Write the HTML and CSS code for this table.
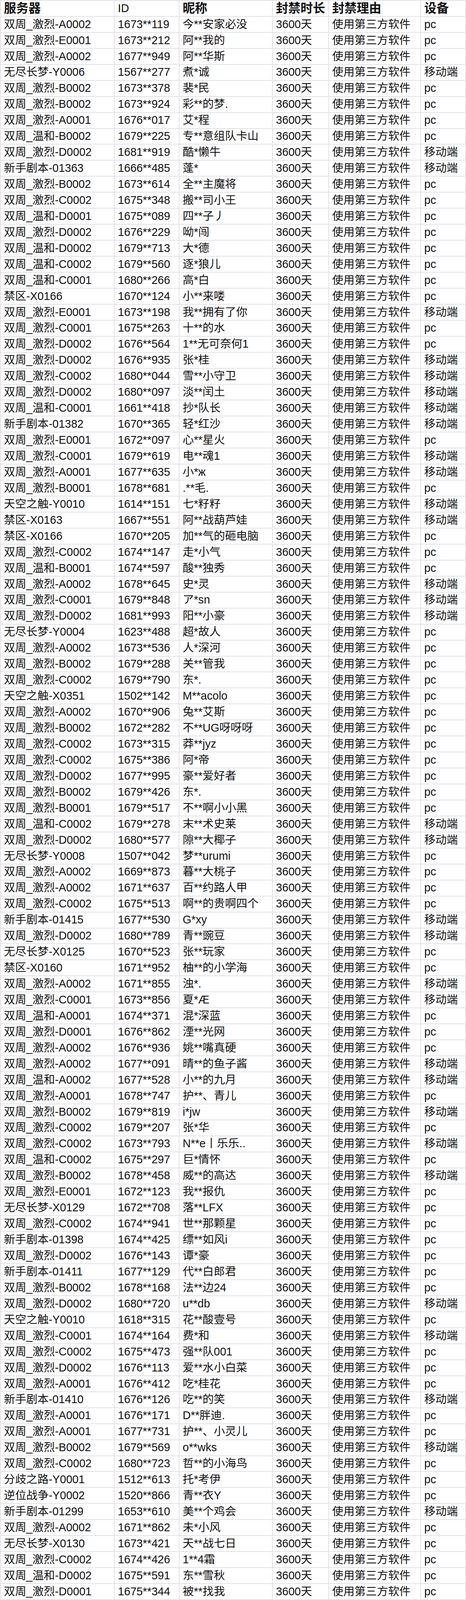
FILE: index.html
```html
<!DOCTYPE html>
<html lang="zh-CN">
<head>
<meta charset="utf-8">
<title>封禁名单</title>
<link rel="stylesheet" href="styles.css">
</head>
<body>
<div class="sheet">
<div class="row head"><div class="c">服务器</div><div class="c id">ID</div><div class="c">昵称</div><div class="c">封禁时长</div><div class="c">封禁理由</div><div class="c">设备</div></div>
<div class="row"><div class="c">双周_激烈-A0002</div><div class="c">1673**119</div><div class="c">今**安家必没</div><div class="c">3600天</div><div class="c">使用第三方软件</div><div class="c">pc</div></div>
<div class="row"><div class="c">双周_激烈-E0001</div><div class="c">1673**212</div><div class="c">阿**我的</div><div class="c">3600天</div><div class="c">使用第三方软件</div><div class="c">pc</div></div>
<div class="row"><div class="c">双周_激烈-A0002</div><div class="c">1677**949</div><div class="c">阿**华斯</div><div class="c">3600天</div><div class="c">使用第三方软件</div><div class="c">pc</div></div>
<div class="row"><div class="c">无尽长梦-Y0006</div><div class="c">1567**277</div><div class="c">煮*诚</div><div class="c">3600天</div><div class="c">使用第三方软件</div><div class="c">移动端</div></div>
<div class="row"><div class="c">双周_激烈-B0002</div><div class="c">1673**378</div><div class="c">裴*民</div><div class="c">3600天</div><div class="c">使用第三方软件</div><div class="c">pc</div></div>
<div class="row"><div class="c">双周_激烈-B0002</div><div class="c">1673**924</div><div class="c">彩**的梦.</div><div class="c">3600天</div><div class="c">使用第三方软件</div><div class="c">pc</div></div>
<div class="row"><div class="c">双周_激烈-A0001</div><div class="c">1676**017</div><div class="c">艾*程</div><div class="c">3600天</div><div class="c">使用第三方软件</div><div class="c">pc</div></div>
<div class="row"><div class="c">双周_温和-B0002</div><div class="c">1679**225</div><div class="c">专**意组队卡山</div><div class="c">3600天</div><div class="c">使用第三方软件</div><div class="c">pc</div></div>
<div class="row"><div class="c">双周_激烈-D0002</div><div class="c">1681**919</div><div class="c">酷*懒牛</div><div class="c">3600天</div><div class="c">使用第三方软件</div><div class="c">移动端</div></div>
<div class="row"><div class="c">新手剧本-01363</div><div class="c">1666**485</div><div class="c">蓬*</div><div class="c">3600天</div><div class="c">使用第三方软件</div><div class="c">移动端</div></div>
<div class="row"><div class="c">双周_激烈-B0002</div><div class="c">1673**614</div><div class="c">全**主魔将</div><div class="c">3600天</div><div class="c">使用第三方软件</div><div class="c">pc</div></div>
<div class="row"><div class="c">双周_激烈-C0002</div><div class="c">1675**348</div><div class="c">搬**司小王</div><div class="c">3600天</div><div class="c">使用第三方软件</div><div class="c">pc</div></div>
<div class="row"><div class="c">双周_温和-D0001</div><div class="c">1675**089</div><div class="c">四**子丿</div><div class="c">3600天</div><div class="c">使用第三方软件</div><div class="c">pc</div></div>
<div class="row"><div class="c">双周_激烈-D0002</div><div class="c">1676**229</div><div class="c">呦*闯</div><div class="c">3600天</div><div class="c">使用第三方软件</div><div class="c">pc</div></div>
<div class="row"><div class="c">双周_温和-D0002</div><div class="c">1679**713</div><div class="c">大*德</div><div class="c">3600天</div><div class="c">使用第三方软件</div><div class="c">pc</div></div>
<div class="row"><div class="c">双周_温和-C0002</div><div class="c">1679**560</div><div class="c">逐*狼儿</div><div class="c">3600天</div><div class="c">使用第三方软件</div><div class="c">pc</div></div>
<div class="row"><div class="c">双周_温和-C0001</div><div class="c">1680**266</div><div class="c">高*白</div><div class="c">3600天</div><div class="c">使用第三方软件</div><div class="c">pc</div></div>
<div class="row"><div class="c">禁区-X0166</div><div class="c">1670**124</div><div class="c">小**来喽</div><div class="c">3600天</div><div class="c">使用第三方软件</div><div class="c">pc</div></div>
<div class="row"><div class="c">双周_激烈-E0001</div><div class="c">1673**198</div><div class="c">我**拥有了你</div><div class="c">3600天</div><div class="c">使用第三方软件</div><div class="c">移动端</div></div>
<div class="row"><div class="c">双周_激烈-C0001</div><div class="c">1675**263</div><div class="c">十**的水</div><div class="c">3600天</div><div class="c">使用第三方软件</div><div class="c">pc</div></div>
<div class="row"><div class="c">双周_激烈-D0002</div><div class="c">1676**564</div><div class="c">1**无可奈何1</div><div class="c">3600天</div><div class="c">使用第三方软件</div><div class="c">pc</div></div>
<div class="row"><div class="c">双周_激烈-D0002</div><div class="c">1676**935</div><div class="c">张*桂</div><div class="c">3600天</div><div class="c">使用第三方软件</div><div class="c">移动端</div></div>
<div class="row"><div class="c">双周_激烈-C0002</div><div class="c">1680**044</div><div class="c">雪**小守卫</div><div class="c">3600天</div><div class="c">使用第三方软件</div><div class="c">移动端</div></div>
<div class="row"><div class="c">双周_激烈-D0002</div><div class="c">1680**097</div><div class="c">淡**闰土</div><div class="c">3600天</div><div class="c">使用第三方软件</div><div class="c">移动端</div></div>
<div class="row"><div class="c">双周_温和-C0001</div><div class="c">1661**418</div><div class="c">抄*队长</div><div class="c">3600天</div><div class="c">使用第三方软件</div><div class="c">移动端</div></div>
<div class="row"><div class="c">新手剧本-01382</div><div class="c">1670**365</div><div class="c">轻*红沙</div><div class="c">3600天</div><div class="c">使用第三方软件</div><div class="c">移动端</div></div>
<div class="row"><div class="c">双周_激烈-E0001</div><div class="c">1672**097</div><div class="c">心**星火</div><div class="c">3600天</div><div class="c">使用第三方软件</div><div class="c">pc</div></div>
<div class="row"><div class="c">双周_激烈-C0001</div><div class="c">1679**619</div><div class="c">电**魂1</div><div class="c">3600天</div><div class="c">使用第三方软件</div><div class="c">移动端</div></div>
<div class="row"><div class="c">双周_激烈-A0001</div><div class="c">1677**635</div><div class="c">小*ж</div><div class="c">3600天</div><div class="c">使用第三方软件</div><div class="c">移动端</div></div>
<div class="row"><div class="c">双周_激烈-B0001</div><div class="c">1678**681</div><div class="c">.**毛.</div><div class="c">3600天</div><div class="c">使用第三方软件</div><div class="c">pc</div></div>
<div class="row"><div class="c">天空之触-Y0010</div><div class="c">1614**151</div><div class="c">七*籽籽</div><div class="c">3600天</div><div class="c">使用第三方软件</div><div class="c">移动端</div></div>
<div class="row"><div class="c">禁区-X0163</div><div class="c">1667**551</div><div class="c">阿**战葫芦娃</div><div class="c">3600天</div><div class="c">使用第三方软件</div><div class="c">移动端</div></div>
<div class="row"><div class="c">禁区-X0166</div><div class="c">1670**205</div><div class="c">加**气的砸电脑</div><div class="c">3600天</div><div class="c">使用第三方软件</div><div class="c">pc</div></div>
<div class="row"><div class="c">双周_激烈-C0002</div><div class="c">1674**147</div><div class="c">走*小气</div><div class="c">3600天</div><div class="c">使用第三方软件</div><div class="c">pc</div></div>
<div class="row"><div class="c">双周_温和-B0001</div><div class="c">1674**597</div><div class="c">酸**独秀</div><div class="c">3600天</div><div class="c">使用第三方软件</div><div class="c">pc</div></div>
<div class="row"><div class="c">双周_激烈-A0002</div><div class="c">1678**645</div><div class="c">史*灵</div><div class="c">3600天</div><div class="c">使用第三方软件</div><div class="c">移动端</div></div>
<div class="row"><div class="c">双周_激烈-C0001</div><div class="c">1679**848</div><div class="c">ア*sn</div><div class="c">3600天</div><div class="c">使用第三方软件</div><div class="c">移动端</div></div>
<div class="row"><div class="c">双周_激烈-D0002</div><div class="c">1681**993</div><div class="c">阳**小豪</div><div class="c">3600天</div><div class="c">使用第三方软件</div><div class="c">移动端</div></div>
<div class="row"><div class="c">无尽长梦-Y0004</div><div class="c">1623**488</div><div class="c">超*故人</div><div class="c">3600天</div><div class="c">使用第三方软件</div><div class="c">pc</div></div>
<div class="row"><div class="c">双周_激烈-A0002</div><div class="c">1673**536</div><div class="c">人*深河</div><div class="c">3600天</div><div class="c">使用第三方软件</div><div class="c">pc</div></div>
<div class="row"><div class="c">双周_激烈-B0002</div><div class="c">1679**288</div><div class="c">关**管我</div><div class="c">3600天</div><div class="c">使用第三方软件</div><div class="c">pc</div></div>
<div class="row"><div class="c">双周_激烈-C0002</div><div class="c">1679**790</div><div class="c">东*.</div><div class="c">3600天</div><div class="c">使用第三方软件</div><div class="c">pc</div></div>
<div class="row"><div class="c">天空之触-X0351</div><div class="c">1502**142</div><div class="c">M**acolo</div><div class="c">3600天</div><div class="c">使用第三方软件</div><div class="c">pc</div></div>
<div class="row"><div class="c">双周_激烈-A0002</div><div class="c">1670**906</div><div class="c">兔**艾斯</div><div class="c">3600天</div><div class="c">使用第三方软件</div><div class="c">pc</div></div>
<div class="row"><div class="c">双周_激烈-B0002</div><div class="c">1672**282</div><div class="c">不**UG呀呀呀</div><div class="c">3600天</div><div class="c">使用第三方软件</div><div class="c">pc</div></div>
<div class="row"><div class="c">双周_激烈-C0002</div><div class="c">1673**315</div><div class="c">莽**jyz</div><div class="c">3600天</div><div class="c">使用第三方软件</div><div class="c">pc</div></div>
<div class="row"><div class="c">双周_激烈-C0002</div><div class="c">1675**386</div><div class="c">阿*帝</div><div class="c">3600天</div><div class="c">使用第三方软件</div><div class="c">pc</div></div>
<div class="row"><div class="c">双周_激烈-D0002</div><div class="c">1677**995</div><div class="c">豪**爱好者</div><div class="c">3600天</div><div class="c">使用第三方软件</div><div class="c">pc</div></div>
<div class="row"><div class="c">双周_激烈-B0002</div><div class="c">1679**426</div><div class="c">东*.</div><div class="c">3600天</div><div class="c">使用第三方软件</div><div class="c">pc</div></div>
<div class="row"><div class="c">双周_激烈-B0001</div><div class="c">1679**517</div><div class="c">不**啊小小黑</div><div class="c">3600天</div><div class="c">使用第三方软件</div><div class="c">pc</div></div>
<div class="row"><div class="c">双周_温和-C0002</div><div class="c">1679**278</div><div class="c">末**术史莱</div><div class="c">3600天</div><div class="c">使用第三方软件</div><div class="c">移动端</div></div>
<div class="row"><div class="c">双周_激烈-D0002</div><div class="c">1680**577</div><div class="c">隙**大椰子</div><div class="c">3600天</div><div class="c">使用第三方软件</div><div class="c">移动端</div></div>
<div class="row"><div class="c">无尽长梦-Y0008</div><div class="c">1507**042</div><div class="c">梦**urumi</div><div class="c">3600天</div><div class="c">使用第三方软件</div><div class="c">pc</div></div>
<div class="row"><div class="c">双周_激烈-A0002</div><div class="c">1669**873</div><div class="c">暮**大桃子</div><div class="c">3600天</div><div class="c">使用第三方软件</div><div class="c">pc</div></div>
<div class="row"><div class="c">双周_激烈-A0002</div><div class="c">1671**637</div><div class="c">百**约路人甲</div><div class="c">3600天</div><div class="c">使用第三方软件</div><div class="c">pc</div></div>
<div class="row"><div class="c">双周_激烈-C0002</div><div class="c">1675**513</div><div class="c">啊**的贵啊四个</div><div class="c">3600天</div><div class="c">使用第三方软件</div><div class="c">pc</div></div>
<div class="row"><div class="c">新手剧本-01415</div><div class="c">1677**530</div><div class="c">G*xy</div><div class="c">3600天</div><div class="c">使用第三方软件</div><div class="c">移动端</div></div>
<div class="row"><div class="c">双周_激烈-D0002</div><div class="c">1680**789</div><div class="c">青**豌豆</div><div class="c">3600天</div><div class="c">使用第三方软件</div><div class="c">移动端</div></div>
<div class="row"><div class="c">无尽长梦-X0125</div><div class="c">1670**523</div><div class="c">张**玩家</div><div class="c">3600天</div><div class="c">使用第三方软件</div><div class="c">pc</div></div>
<div class="row"><div class="c">禁区-X0160</div><div class="c">1671**952</div><div class="c">柚**的小学海</div><div class="c">3600天</div><div class="c">使用第三方软件</div><div class="c">pc</div></div>
<div class="row"><div class="c">双周_激烈-A0002</div><div class="c">1671**855</div><div class="c">浊*.</div><div class="c">3600天</div><div class="c">使用第三方软件</div><div class="c">移动端</div></div>
<div class="row"><div class="c">双周_激烈-C0001</div><div class="c">1673**856</div><div class="c">夏*Æ</div><div class="c">3600天</div><div class="c">使用第三方软件</div><div class="c">移动端</div></div>
<div class="row"><div class="c">双周_温和-A0001</div><div class="c">1674**371</div><div class="c">混*深蓝</div><div class="c">3600天</div><div class="c">使用第三方软件</div><div class="c">pc</div></div>
<div class="row"><div class="c">双周_激烈-D0001</div><div class="c">1676**862</div><div class="c">湮**光网</div><div class="c">3600天</div><div class="c">使用第三方软件</div><div class="c">pc</div></div>
<div class="row"><div class="c">双周_激烈-A0002</div><div class="c">1676**936</div><div class="c">姚**嘴真硬</div><div class="c">3600天</div><div class="c">使用第三方软件</div><div class="c">pc</div></div>
<div class="row"><div class="c">双周_激烈-A0002</div><div class="c">1677**091</div><div class="c">晴**的鱼子酱</div><div class="c">3600天</div><div class="c">使用第三方软件</div><div class="c">移动端</div></div>
<div class="row"><div class="c">双周_温和-A0002</div><div class="c">1677**528</div><div class="c">小**的九月</div><div class="c">3600天</div><div class="c">使用第三方软件</div><div class="c">移动端</div></div>
<div class="row"><div class="c">双周_激烈-A0001</div><div class="c">1678**747</div><div class="c">护**、青儿</div><div class="c">3600天</div><div class="c">使用第三方软件</div><div class="c">pc</div></div>
<div class="row"><div class="c">双周_激烈-B0002</div><div class="c">1679**819</div><div class="c">i*jw</div><div class="c">3600天</div><div class="c">使用第三方软件</div><div class="c">移动端</div></div>
<div class="row"><div class="c">双周_激烈-C0002</div><div class="c">1679**207</div><div class="c">张*华</div><div class="c">3600天</div><div class="c">使用第三方软件</div><div class="c">pc</div></div>
<div class="row"><div class="c">双周_激烈-C0002</div><div class="c">1673**793</div><div class="c">N**e丨乐乐..</div><div class="c">3600天</div><div class="c">使用第三方软件</div><div class="c">移动端</div></div>
<div class="row"><div class="c">双周_温和-C0002</div><div class="c">1675**297</div><div class="c">巨*情怀</div><div class="c">3600天</div><div class="c">使用第三方软件</div><div class="c">pc</div></div>
<div class="row"><div class="c">双周_激烈-B0002</div><div class="c">1678**458</div><div class="c">威**的高达</div><div class="c">3600天</div><div class="c">使用第三方软件</div><div class="c">移动端</div></div>
<div class="row"><div class="c">双周_激烈-E0001</div><div class="c">1672**123</div><div class="c">我**报仇</div><div class="c">3600天</div><div class="c">使用第三方软件</div><div class="c">pc</div></div>
<div class="row"><div class="c">无尽长梦-X0129</div><div class="c">1672**708</div><div class="c">落**LFX</div><div class="c">3600天</div><div class="c">使用第三方软件</div><div class="c">pc</div></div>
<div class="row"><div class="c">双周_激烈-C0002</div><div class="c">1674**941</div><div class="c">世**那颗星</div><div class="c">3600天</div><div class="c">使用第三方软件</div><div class="c">pc</div></div>
<div class="row"><div class="c">新手剧本-01398</div><div class="c">1674**425</div><div class="c">缥**如风i</div><div class="c">3600天</div><div class="c">使用第三方软件</div><div class="c">pc</div></div>
<div class="row"><div class="c">双周_激烈-D0002</div><div class="c">1676**143</div><div class="c">谭*豪</div><div class="c">3600天</div><div class="c">使用第三方软件</div><div class="c">pc</div></div>
<div class="row"><div class="c">新手剧本-01411</div><div class="c">1677**129</div><div class="c">代**白郎君</div><div class="c">3600天</div><div class="c">使用第三方软件</div><div class="c">pc</div></div>
<div class="row"><div class="c">双周_激烈-B0002</div><div class="c">1678**168</div><div class="c">法**边24</div><div class="c">3600天</div><div class="c">使用第三方软件</div><div class="c">pc</div></div>
<div class="row"><div class="c">双周_激烈-D0002</div><div class="c">1680**720</div><div class="c">u**db</div><div class="c">3600天</div><div class="c">使用第三方软件</div><div class="c">移动端</div></div>
<div class="row"><div class="c">天空之触-Y0010</div><div class="c">1618**315</div><div class="c">花**酸壹号</div><div class="c">3600天</div><div class="c">使用第三方软件</div><div class="c">pc</div></div>
<div class="row"><div class="c">双周_激烈-C0001</div><div class="c">1674**164</div><div class="c">费*和</div><div class="c">3600天</div><div class="c">使用第三方软件</div><div class="c">移动端</div></div>
<div class="row"><div class="c">双周_激烈-C0002</div><div class="c">1675**473</div><div class="c">强**队001</div><div class="c">3600天</div><div class="c">使用第三方软件</div><div class="c">pc</div></div>
<div class="row"><div class="c">双周_激烈-D0002</div><div class="c">1676**113</div><div class="c">爱**水小白菜</div><div class="c">3600天</div><div class="c">使用第三方软件</div><div class="c">pc</div></div>
<div class="row"><div class="c">双周_激烈-A0001</div><div class="c">1676**412</div><div class="c">吃*桂花</div><div class="c">3600天</div><div class="c">使用第三方软件</div><div class="c">pc</div></div>
<div class="row"><div class="c">新手剧本-01410</div><div class="c">1676**126</div><div class="c">吃**的笑</div><div class="c">3600天</div><div class="c">使用第三方软件</div><div class="c">移动端</div></div>
<div class="row"><div class="c">双周_激烈-A0001</div><div class="c">1676**171</div><div class="c">D**胖迪.</div><div class="c">3600天</div><div class="c">使用第三方软件</div><div class="c">pc</div></div>
<div class="row"><div class="c">双周_激烈-A0001</div><div class="c">1677**731</div><div class="c">护**、小灵儿</div><div class="c">3600天</div><div class="c">使用第三方软件</div><div class="c">pc</div></div>
<div class="row"><div class="c">双周_激烈-B0002</div><div class="c">1679**569</div><div class="c">o**wks</div><div class="c">3600天</div><div class="c">使用第三方软件</div><div class="c">移动端</div></div>
<div class="row"><div class="c">双周_激烈-C0002</div><div class="c">1680**723</div><div class="c">哲**的小海鸟</div><div class="c">3600天</div><div class="c">使用第三方软件</div><div class="c">pc</div></div>
<div class="row"><div class="c">分歧之路-Y0001</div><div class="c">1512**613</div><div class="c">托*考伊</div><div class="c">3600天</div><div class="c">使用第三方软件</div><div class="c">pc</div></div>
<div class="row"><div class="c">逆位战争-Y0002</div><div class="c">1520**866</div><div class="c">青**衣Y</div><div class="c">3600天</div><div class="c">使用第三方软件</div><div class="c">pc</div></div>
<div class="row"><div class="c">新手剧本-01299</div><div class="c">1653**610</div><div class="c">美**个鸡会</div><div class="c">3600天</div><div class="c">使用第三方软件</div><div class="c">移动端</div></div>
<div class="row"><div class="c">双周_激烈-A0002</div><div class="c">1671**862</div><div class="c">未*小风</div><div class="c">3600天</div><div class="c">使用第三方软件</div><div class="c">pc</div></div>
<div class="row"><div class="c">无尽长梦-X0130</div><div class="c">1673**421</div><div class="c">天**战七日</div><div class="c">3600天</div><div class="c">使用第三方软件</div><div class="c">pc</div></div>
<div class="row"><div class="c">双周_激烈-C0002</div><div class="c">1674**426</div><div class="c">1**4霜</div><div class="c">3600天</div><div class="c">使用第三方软件</div><div class="c">pc</div></div>
<div class="row"><div class="c">双周_温和-D0002</div><div class="c">1675**591</div><div class="c">东**雪秋</div><div class="c">3600天</div><div class="c">使用第三方软件</div><div class="c">pc</div></div>
<div class="row"><div class="c">双周_激烈-D0001</div><div class="c">1675**344</div><div class="c">被**找我</div><div class="c">3600天</div><div class="c">使用第三方软件</div><div class="c">pc</div></div>
</div>
</body>
</html>
```
FILE: styles.css
```css
html, body {
  margin: 0;
  padding: 0;
  background: #ffffff;
}

/* The sheet fills the window height exactly: 100 rows share it equally
   (48px each in a 4802px-tall window). */
.sheet {
  width: 1194px;
  height: 100vh;
  box-sizing: border-box;
  display: grid;
  grid-template-rows: repeat(100, minmax(0, 1fr));
  border-left: 2px solid #e1e1e8;
  border-top: 2px solid #e1e1e8;
  font-family: "Liberation Sans", "Noto Sans CJK SC", sans-serif;
  font-size: 28.7px;
  color: #111111;
}

.row {
  display: grid;
  grid-template-columns: 292px 166px 239px 144px 236px 115px;
  min-height: 0;
}

.c {
  box-sizing: border-box;
  display: flex;
  align-items: center;
  min-height: 0;
  padding-left: 8px;
  border-right: 2px solid #e1e1e8;
  border-bottom: 2px solid #e1e1e8;
  line-height: 1.1;
  white-space: nowrap;
  overflow: hidden;
}

.head .c {
  font-weight: bold;
  font-size: 31.5px;
}

.head .c.id {
  font-weight: normal;
  font-size: 28.7px;
}
```
